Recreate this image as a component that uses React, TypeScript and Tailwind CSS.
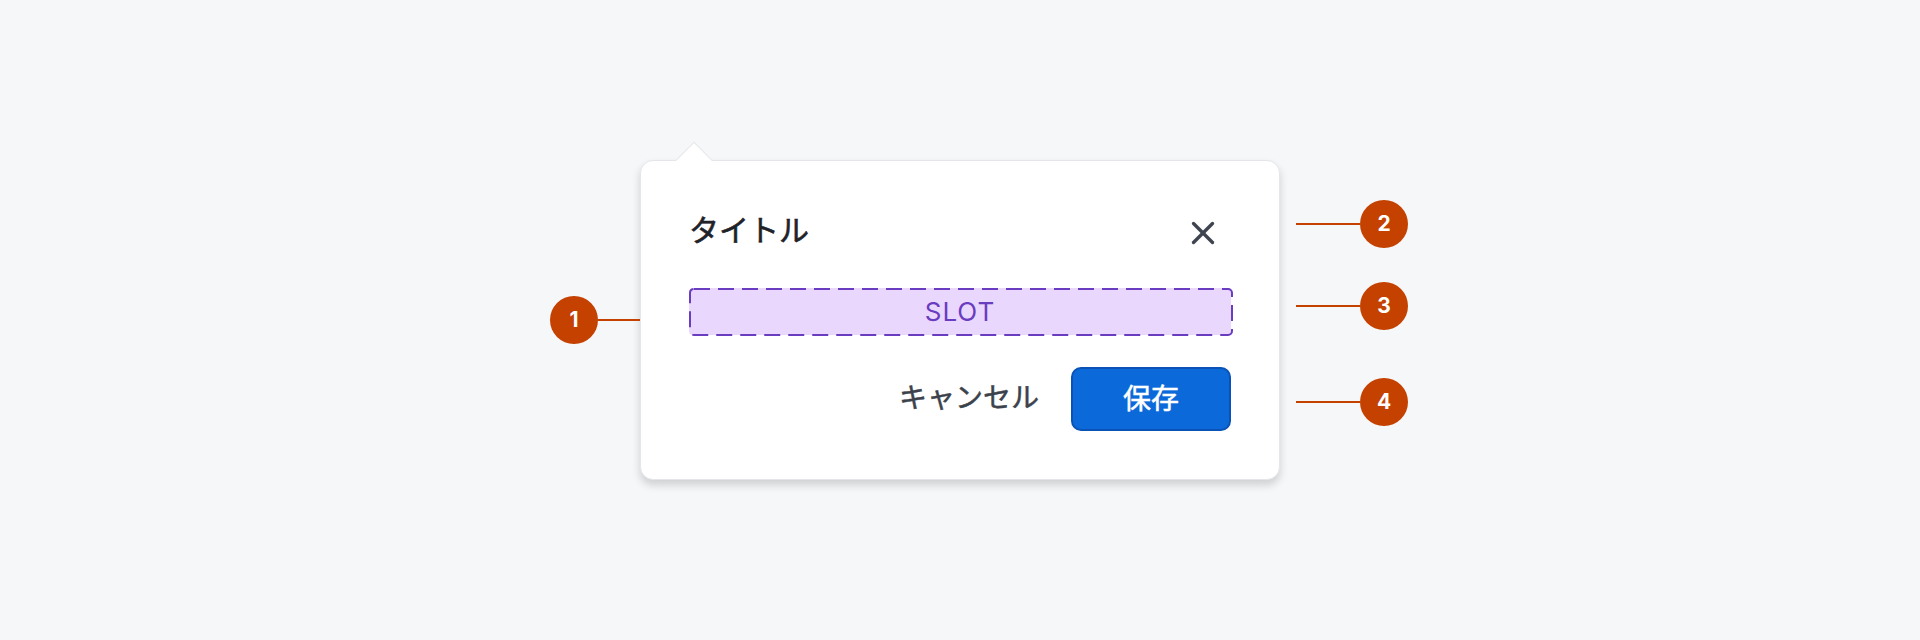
import { X } from "lucide-react";

const FONT = {
  fontFamily: 'Inter, "Noto Sans CJK JP", sans-serif',
};

function Marker({ n, className }: { n: number; className: string }) {
  return (
    <div className={`absolute flex items-center ${className}`}>
      <div className="flex h-12 w-12 items-center justify-center rounded-full bg-[#c44100] text-[21px] font-bold text-white">
        {n}
      </div>
    </div>
  );
}

export default function App() {
  return (
    <div className="flex h-[640px] w-full items-center justify-center bg-[#f6f7f9]" style={FONT}>
      <div className="relative">
        {/* Popover */}
        <div className="relative flex h-[320px] w-[640px] flex-col rounded-[13px] border border-[#e4e6ea] bg-white px-12 pb-12 pt-12 shadow-[0_5px_9px_rgba(0,0,0,0.16)]">
          {/* caret */}
          <div className="absolute -top-[14px] left-[40px] h-[26px] w-[26px] rotate-45 border-l border-t border-[#e4e6ea] bg-white" />

          <div className="flex h-12 items-center justify-between">
            <h1 className="pb-[5px] text-[30px] leading-none text-[#1f2329] [-webkit-text-stroke:0.6px_currentColor]">
              タイトル
            </h1>
            <button className="mr-[8px] flex h-10 w-10 items-center justify-center text-[#3f4550]">
              <X size={38} strokeWidth={2.1} />
            </button>
          </div>

          <div className="relative mt-8 flex h-12 items-center justify-center rounded-[4px] bg-[#ead7fd]">
            <svg className="absolute inset-0" width="544" height="48" viewBox="0 0 544 48">
              <rect
                x="1"
                y="1"
                width="542"
                height="46"
                rx="4"
                fill="none"
                stroke="#6a3cc0"
                strokeWidth="2"
                strokeDasharray="16 8"
              />
            </svg>
            <span className="relative text-[26px] tracking-[1px] text-[#6a3cc0]">SLOT</span>
          </div>

          <div className="mt-8 flex h-16 items-center justify-end gap-8">
            <button className="pb-[2px] text-[28px] text-[#3b424c] [-webkit-text-stroke:0.5px_currentColor]">
              キャンセル
            </button>
            <button className="flex h-16 w-40 items-center justify-center rounded-[10px] border-2 border-[#0a52b5] bg-[#0b69d9] text-[28px] text-white [-webkit-text-stroke:0.5px_currentColor]">
              保存
            </button>
          </div>
        </div>

        {/* Annotations */}
        <div className="absolute left-[-42px] top-[159px] h-[2px] w-[42px] bg-[#c44100]" />
        <Marker n={1} className="left-[-90px] top-[136px]" />

        <div className="absolute left-[656px] top-[63px] h-[2px] w-[64px] bg-[#c44100]" />
        <Marker n={2} className="left-[720px] top-[40px]" />

        <div className="absolute left-[656px] top-[145px] h-[2px] w-[64px] bg-[#c44100]" />
        <Marker n={3} className="left-[720px] top-[122px]" />

        <div className="absolute left-[656px] top-[241px] h-[2px] w-[64px] bg-[#c44100]" />
        <Marker n={4} className="left-[720px] top-[218px]" />
      </div>
    </div>
  );
}
